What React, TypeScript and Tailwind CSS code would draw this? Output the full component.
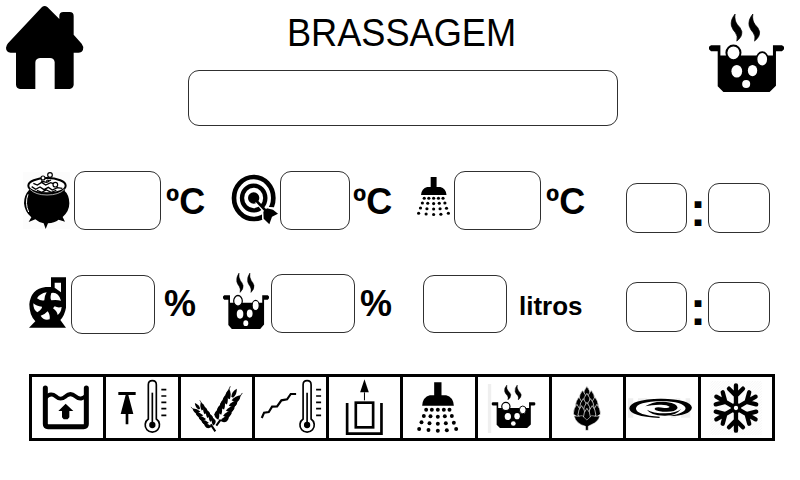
import React from "react";

type BoxProps = { viewBox: string; className: string; children: React.ReactNode };

function Drawing({ viewBox, className, children }: BoxProps) {
  return (
    <svg viewBox={viewBox} preserveAspectRatio="none" className={`block shrink-0 ${className}`}>
      {children}
    </svg>
  );
}

function PotShapes() {
  return (
    <g>
      <path d="M405 42Q390 60 394 78Q398 90 406 98Q414 108 410 123Q427 110 425 94Q421 82 412 74Q402 62 405 42Z" stroke="#000" strokeWidth="2" />
      <path d="M458 42Q443 60 447 78Q451 90 459 98Q467 108 463 123Q480 110 478 94Q474 82 465 74Q455 62 458 42Z" stroke="#000" strokeWidth="2" />
      <path d="M333 135H361V166H518V135H545L551 140V147L545 153H527V256L508 275H370L353 258V153H333L327 147V140Z" />
      <ellipse cx="400" cy="158" rx="21" ry="22" fill="#fff" stroke="#000" strokeWidth="6" />
      <ellipse cx="486" cy="177" rx="17" ry="21" fill="#fff" stroke="#000" strokeWidth="5" />
      <g fill="#fff">
        <ellipse cx="410" cy="213" rx="16" ry="19" />
        <ellipse cx="457" cy="211" rx="14" ry="17" />
        <ellipse cx="438" cy="251" rx="12" ry="12" />
      </g>
    </g>
  );
}

const DROPS: number[][] = [
  [530, 134], [547, 134], [565, 134], [583, 134], [600, 134],
  [523, 153], [543, 154], [565, 155], [586, 154], [607, 153],
  [516, 172], [540, 175], [565, 176], [589, 175], [613, 173],
  [509, 192], [537, 195], [565, 197], [592, 196], [620, 192],
];

function ShowerShapes() {
  return (
    <g>
      <path d="M554 52H576V91H590Q611 96 613 122H518Q520 96 541 91H554Z" />
      {DROPS.map(([x, y]) => (
        <circle key={`${x}-${y}`} cx={x} cy={y} r="5.900" />
      ))}
    </g>
  );
}

function Thermometer() {
  return (
    <g fill="none" stroke="#000" strokeWidth="5">
      <path d="M386 162V59Q386 47 398 47Q410 47 410 59V162A21.500 21.500 0 1 1 386 162Z" />
      <path d="M398 83V178" />
      <circle cx="398" cy="180" r="9.500" fill="#000" stroke="none" />
      <path d="M425 74H440M425 93H440M425 112H440M425 131H440M425 151H440" />
    </g>
  );
}

function HomeIcon() {
  return (
    <Drawing viewBox="18 15 234 252" className="w-[78px] h-[84px]">
      <path d="M126 21Q134 15 142 21L178 57V48Q178 36 190 36H209Q221 36 221 48V104L245 131Q252 140 249 149Q246 158 235 158H221V255Q219 266 209 267H164V186Q162 174 150 174H120Q106 176 106 188V267H60Q49 265 48 254V158H32Q18 156 18 143Q19 136 24 130Z" />
    </Drawing>
  );
}

function CauldronIcon() {
  return (
    <Drawing viewBox="24 33 141 177" className="w-[47px] h-[59px]">
      <rect x="24" y="36" width="141" height="171" fill="#fcfcfc" />
      <path d="M42 90Q27 106 27 130Q29 156 49 172L41 186L61 178Q72 188 86 190L92 207L99 190Q118 189 131 179L150 185L143 171Q163 154 163 130Q163 104 146 90Z" />
      <ellipse cx="96" cy="77" rx="56" ry="23" fill="#fff" stroke="#000" strokeWidth="6" />
      <path d="M43 88Q60 108 96 108Q132 108 150 88L148 97Q130 114 96 114Q60 112 42 97Z" fill="#000" />
      <path d="M45 88Q62 105 96 105Q132 105 148 88" fill="none" stroke="#fff" strokeWidth="2" />
      <path d="M39 103Q29 130 41 156" fill="none" stroke="#fff" strokeWidth="3" />
      <path d="M50 80L62 88L75 81L87 89L100 82L112 90L127 83L142 85M55 70L67 75L80 67L92 75L107 68L118 72M66 91L80 97L94 90L109 97L124 91M78 63L94 67L108 60" fill="none" stroke="#000" strokeWidth="4" />
      <g fill="#fff" stroke="#000" strokeWidth="3.500">
        <circle cx="84" cy="54" r="6" />
        <circle cx="105" cy="45" r="7" />
        <circle cx="121" cy="74" r="7" />
        <circle cx="98" cy="63" r="3" />
      </g>
    </Drawing>
  );
}

function TargetIcon() {
  return (
    <Drawing viewBox="48 42 144 153" className="w-[48px] h-[51px]">
      <ellipse cx="116" cy="114" rx="59" ry="63" fill="none" stroke="#000" strokeWidth="14" />
      <ellipse cx="116" cy="114" rx="35" ry="37" fill="none" stroke="#000" strokeWidth="13" />
      <circle cx="116" cy="114" r="17" />
      <path d="M124 122L146 146L153 140L176 142L194 162L176 176L168 196L141 178V152L121 128Z" fill="#fff" />
      <path d="M116 114L152 152" stroke="#000" strokeWidth="8" />
      <path d="M145 155L156 145L174 149L189 161L171 170L163 193L146 176Z" />
    </Drawing>
  );
}

function PumpIcon() {
  return (
    <Drawing viewBox="42 36 111 153" className="w-[37px] h-[51px]">
      <path d="M108 37H153V128Q149 151 136 165L153 188H42L61 169Q43 151 43 118Q47 72 92 66H108Z" />
      <g fill="#fff">
        <path d="M119 53H138V82L119 68Z" />
        <path d="M66 100Q74 86 95 82Q88 93 88 106Q78 109 66 100Z" />
        <path d="M109 84Q130 80 138 107Q123 103 109 106Q104 100 109 84Z" />
        <path d="M119 124Q129 129 140 126Q138 143 128 150Q126 138 114 130Z" />
        <path d="M77 152Q88 150 98 139Q106 149 104 163Q86 168 77 152Z" />
        <path d="M55 115Q64 124 81 125Q82 132 67 142Q54 133 55 115Z" />
      </g>
    </Drawing>
  );
}

function PotIcon({ className }: { className: string }) {
  return (
    <Drawing viewBox="327 42 224 233" className={className}>
      <PotShapes />
    </Drawing>
  );
}

function Kernels({ x, y, angle, count, size }: { x: number; y: number; angle: number; count: number; size: number }) {
  return (
    <g transform={`translate(${x} ${y}) rotate(${angle}) scale(${size})`}>
      {Array.from({ length: count }, (_, i) => (
        <g key={i} transform={`translate(0 ${-i * 17})`}>
          <path d="M-3 2Q-15 4 -21 -6Q-23 -14 -19 -24Q-6 -16 -3 2Z" />
          <path d="M3 2Q15 4 21 -6Q23 -14 19 -24Q6 -16 3 2Z" />
          <path d="M-19 -20L-20 -32M19 -20L20 -32" stroke="#000" strokeWidth="2" />
        </g>
      ))}
      <path d={`M-3 ${-count * 17 + 10}Q-9 ${-count * 17 - 4} 0 ${-count * 17 - 18}Q9 ${-count * 17 - 4} 3 ${-count * 17 + 10}Z`} />
    </g>
  );
}

const HOP_SCALES: number[][] = [
  [351, 83], [338, 95], [364, 95], [351, 104], [327, 115], [375, 115],
  [340, 120], [362, 120], [351, 131], [321, 137], [381, 137],
  [335, 141], [367, 141], [351, 149],
];

const STAGES: { name: string; viewBox: string; art: React.ReactNode }[] = [
  {
    name: "fill",
    viewBox: "36 36 213 183",
    art: (
      <g>
        <path d="M76 69V177Q76 185 84 185H191Q199 185 199 177V69" fill="none" stroke="#000" strokeWidth="15" strokeLinecap="round" />
        <path d="M76 99C88 85 99 87 107 94C119 105 127 102 137 94C147 85 158 87 166 94C178 105 190 101 199 91" fill="none" stroke="#000" strokeWidth="12" />
        <path d="M137 116L160 138H148V157L143 163H131L126 157V138H115Z" />
      </g>
    ),
  },
  {
    name: "heat",
    viewBox: "259 36 213 183",
    art: (
      <g>
        <path d="M296 81H348V90H326L341 147H326V178H318V147H303L318 90H296Z" />
        <Thermometer />
      </g>
    ),
  },
  {
    name: "malt",
    viewBox: "482 36 213 183",
    art: (
      <g>
        <Kernels x={598} y={164} angle={29} count={5} size={1.03} />
        <Kernels x={575} y={182} angle={-37} count={5} size={0.83} />
        <path d="M571 178L585 199M588 182L601 164" stroke="#000" strokeWidth="6" />
      </g>
    ),
  },
  {
    name: "ramp",
    viewBox: "14.700 36 213 183",
    art: (
      <g>
        <path d="M35 159L42 143L56 141L66 125L81 124L94 106L111 103L122 87H138" fill="none" stroke="#000" strokeWidth="6.500" />
        <g transform="translate(-227 0)">
          <Thermometer />
        </g>
      </g>
    ),
  },
  {
    name: "lift",
    viewBox: "237.600 36 213 183",
    art: (
      <g fill="none" stroke="#000">
        <path d="M344 43L331 82H357Z" fill="#000" stroke="none" />
        <path d="M344 82V106" strokeWidth="3" />
        <path d="M292 114V206H395V114" strokeWidth="8" />
        <rect x="318" y="113" width="52" height="74" strokeWidth="8" />
      </g>
    ),
  },
  { name: "sparge", viewBox: "460.500 36 213 183", art: <ShowerShapes /> },
  {
    name: "boil",
    viewBox: "23.400 36 213 183",
    art: (
      <g>
        <rect x="53" y="57" width="10" height="147" fill="#efefef" />
        <svg x="64" y="60" width="132" height="129" viewBox="327 42 224 233" preserveAspectRatio="none">
          <PotShapes />
        </svg>
      </g>
    ),
  },
  {
    name: "hops",
    viewBox: "246.300 36 213 183",
    art: (
      <g>
        {HOP_SCALES.map(([x, y]) => (
          <path key={`${x}-${y}`} transform={`translate(${x} ${y})`} d="M0 -19Q10 -8 11 10L0 19L-11 10Q-10 -8 0 -19Z" stroke="#fff" strokeWidth="2" />
        ))}
        <path d="M312 152Q322 155 337 152L351 165L365 152Q380 155 390 152Q385 171 364 179L355 184V196H347V184Q319 177 312 152Z" stroke="#fff" strokeWidth="1.500" />
      </g>
    ),
  },
  {
    name: "whirlpool",
    viewBox: "469.200 36 213 183",
    art: (
      <g>
        <path d="M475 100H491V158H475ZM505 100H532V112H505ZM560 100H590V116H560ZM618 100H632V114H618ZM648 100H662V158H634V145H648ZM604 140H620V158H604Z" fill="#eee" />
        <path d="M570 159Q481 155 479 130Q482 103 574 101Q664 103 667 128Q662 152 598 153Q648 144 648 129Q641 110 577 108Q500 110 499 131Q502 150 570 155Z" />
        <path d="M527 124Q548 109 580 110Q622 112 624 129Q616 143 579 140Q550 137 556 129Q562 125 584 129Q600 129 600 125Q592 118 569 119Q546 119 527 124Z" />
        <path d="M532 134Q548 145 588 145Q620 144 635 132Q618 153 584 152Q542 150 532 134Z" />
      </g>
    ),
  },
  {
    name: "cool",
    viewBox: "692.100 36 213 183",
    art: (
      <g>
        <defs>
          <pattern id="hatch" width="8" height="8" patternUnits="userSpaceOnUse">
            <path d="M0 8L8 0" stroke="#eeeeee" strokeWidth="1.500" />
          </pattern>
        </defs>
        <rect x="720" y="48" width="155" height="162" fill="url(#hatch)" />
        <g fill="none" stroke="#000" strokeWidth="13" strokeLinecap="round">
          {[0, 60, 120, 180, 240, 300].map((a) => (
            <path key={a} transform={`translate(797 129) rotate(${a})`} d="M0 -13V-68M0 -37L-21 -58M0 -37L21 -58" />
          ))}
        </g>
        <circle cx="797" cy="129" r="11" fill="#fff" stroke="#000" strokeWidth="9" />
      </g>
    ),
  },
];

function Field({ className }: { className: string }) {
  return <div className={`shrink-0 rounded-[11px] border border-[#303030] bg-white ${className}`} />;
}

function Unit({ children, className }: { children: string; className: string }) {
  return <span className={`block shrink-0 origin-bottom scale-y-[1.04] whitespace-nowrap text-[36px] leading-none font-bold ${className}`}>{children}</span>;
}

function Timer({ className }: { className: string }) {
  return (
    <div className={`flex h-[50px] w-[144px] shrink-0 justify-between ${className}`}>
      <Field className="h-[50px] w-[61px]" />
      <span className="mt-[3px] ml-px text-[48px] leading-none font-bold">:</span>
      <Field className="h-[50px] w-[62px]" />
    </div>
  );
}

export default function App() {
  return (
    <main className="flex h-[480px] w-[800px] flex-col overflow-hidden bg-white font-['Liberation_Sans',Arial,sans-serif] text-black">
      <header className="flex h-[171px] shrink-0 items-start">
        <div className="mt-[5px] ml-[6px]">
          <HomeIcon />
        </div>
        <div className="ml-[104px] flex w-[430px] flex-col items-center">
          <h1 className="mt-[15px] -ml-[3px] h-[55px] origin-[50%_31px] scale-y-[1.05] text-[36.200px] leading-[37px] font-normal whitespace-nowrap">BRASSAGEM</h1>
          <Field className="h-[56px] w-[430px]" />
        </div>
        <PotIcon className="mt-[14px] ml-[91px] h-[78px] w-[75px]" />
      </header>

      <section className="flex h-[103px] shrink-0 items-start">
        <div className="ml-[23px]">
          <CauldronIcon />
        </div>
        <Field className="ml-[4px] h-[59px] w-[87px]" />
        <Unit className="mt-[13px] ml-[5px] w-[65px]">ºC</Unit>
        <div className="mt-[3px]">
          <TargetIcon />
        </div>
        <Field className="ml-[1px] h-[59px] w-[70px]" />
        <Unit className="mt-[13px] ml-[3px] w-[64px]">ºC</Unit>
        <Drawing viewBox="503 52 123 151" className="mt-[6px] h-[39px] w-[33px]">
          <ShowerShapes />
        </Drawing>
        <Field className="ml-[4px] h-[59px] w-[87px]" />
        <Unit className="mt-[13px] ml-[5px] w-[80px]">ºC</Unit>
        <Timer className="mt-[12px]" />
      </section>

      <section className="flex h-[100px] shrink-0 items-start">
        <div className="mt-[3px] ml-[29px]">
          <PumpIcon />
        </div>
        <Field className="mt-[1px] ml-[5px] h-[59px] w-[84px]" />
        <Unit className="mt-[12px] ml-[9px] w-[59px]">%</Unit>
        <PotIcon className="-mt-px h-[56px] w-[46px]" />
        <Field className="ml-[2px] h-[59px] w-[84px]" />
        <Unit className="mt-[12px] ml-[5px] w-[63px]">%</Unit>
        <Field className="mt-[1px] h-[58px] w-[84px]" />
        <span className="mt-[19px] ml-[12px] w-[107px] text-[26px] leading-none font-bold">litros</span>
        <Timer className="mt-[8px]" />
      </section>

      <nav className="ml-[29px] flex h-[67px] w-[746px] shrink-0 border-y-3 border-l-3 border-black">
        {STAGES.map((s) => (
          <div key={s.name} className="h-[61px] flex-1 border-r-3 border-black">
            <Drawing viewBox={s.viewBox} className="h-[61px] w-[71px]">
              {s.art}
            </Drawing>
          </div>
        ))}
      </nav>
    </main>
  );
}
